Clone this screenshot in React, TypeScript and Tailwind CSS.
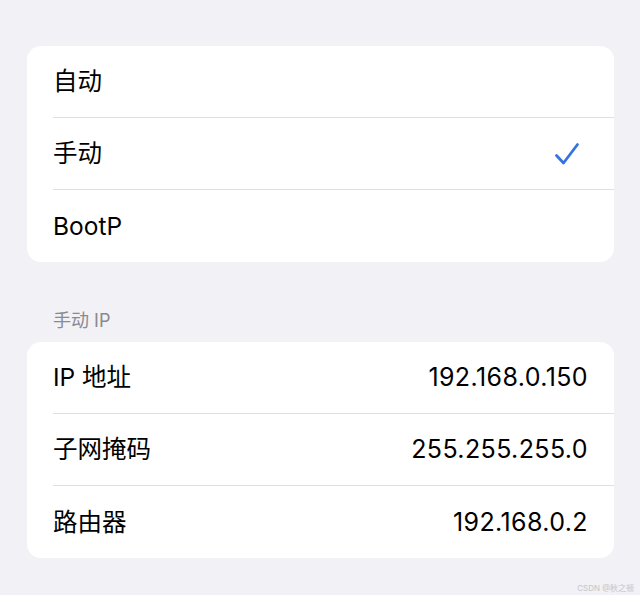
import React from "react";

const font = {
  fontFamily:
    '"Inter", "Noto Sans CJK SC", "Noto Sans", sans-serif',
};

function Check() {
  return (
    <svg width="26" height="24" viewBox="0 0 26 24" fill="none">
      <path
        d="M2.5 13.5 L9.5 21 L23.5 2.5"
        stroke="#3574e0"
        strokeWidth="2.8"
        strokeLinecap="round"
        strokeLinejoin="round"
      />
    </svg>
  );
}

function Row({
  label,
  value,
  checked,
  last,
}: {
  label: string;
  value?: string;
  checked?: boolean;
  last?: boolean;
}) {
  return (
    <div className="flex h-[72px] pl-[26px]">
      <div
        className={`flex flex-1 items-center justify-between pr-[26px] ${
          last ? "" : "border-b border-[#dedee3]"
        }`}
      >
        <span className="text-[24.5px] text-black leading-none">{label}</span>
        {value && (
          <span className="text-[25px] text-black leading-none tracking-[0.4px]">
            {value}
          </span>
        )}
        {checked && (
          <span className="mr-[8px] flex">
            <Check />
          </span>
        )}
      </div>
    </div>
  );
}

export default function App() {
  return (
    <div
      className="relative flex h-[595px] w-[640px] flex-col overflow-hidden bg-[#f1f1f6] px-[27px] pt-[46px] pr-[26px]"
      style={font}
    >
      <div className="overflow-hidden rounded-[14px] bg-white">
        <Row label="自动" />
        <Row label="手动" checked />
        <Row label="BootP" last />
      </div>

      <div className="mt-[50px] pl-[26px] text-[18px] leading-none text-[#8a8a8f]">
        手动 IP
      </div>

      <div className="mt-[12px] overflow-hidden rounded-[14px] bg-white">
        <Row label="IP 地址" value="192.168.0.150" />
        <Row label="子网掩码" value="255.255.255.0" />
        <Row label="路由器" value="192.168.0.2" last />
      </div>

      <div className="absolute bottom-[3px] right-[6px] text-[8px] leading-none text-[#c4c4c9]">
        CSDN @秋之顿
      </div>
    </div>
  );
}
